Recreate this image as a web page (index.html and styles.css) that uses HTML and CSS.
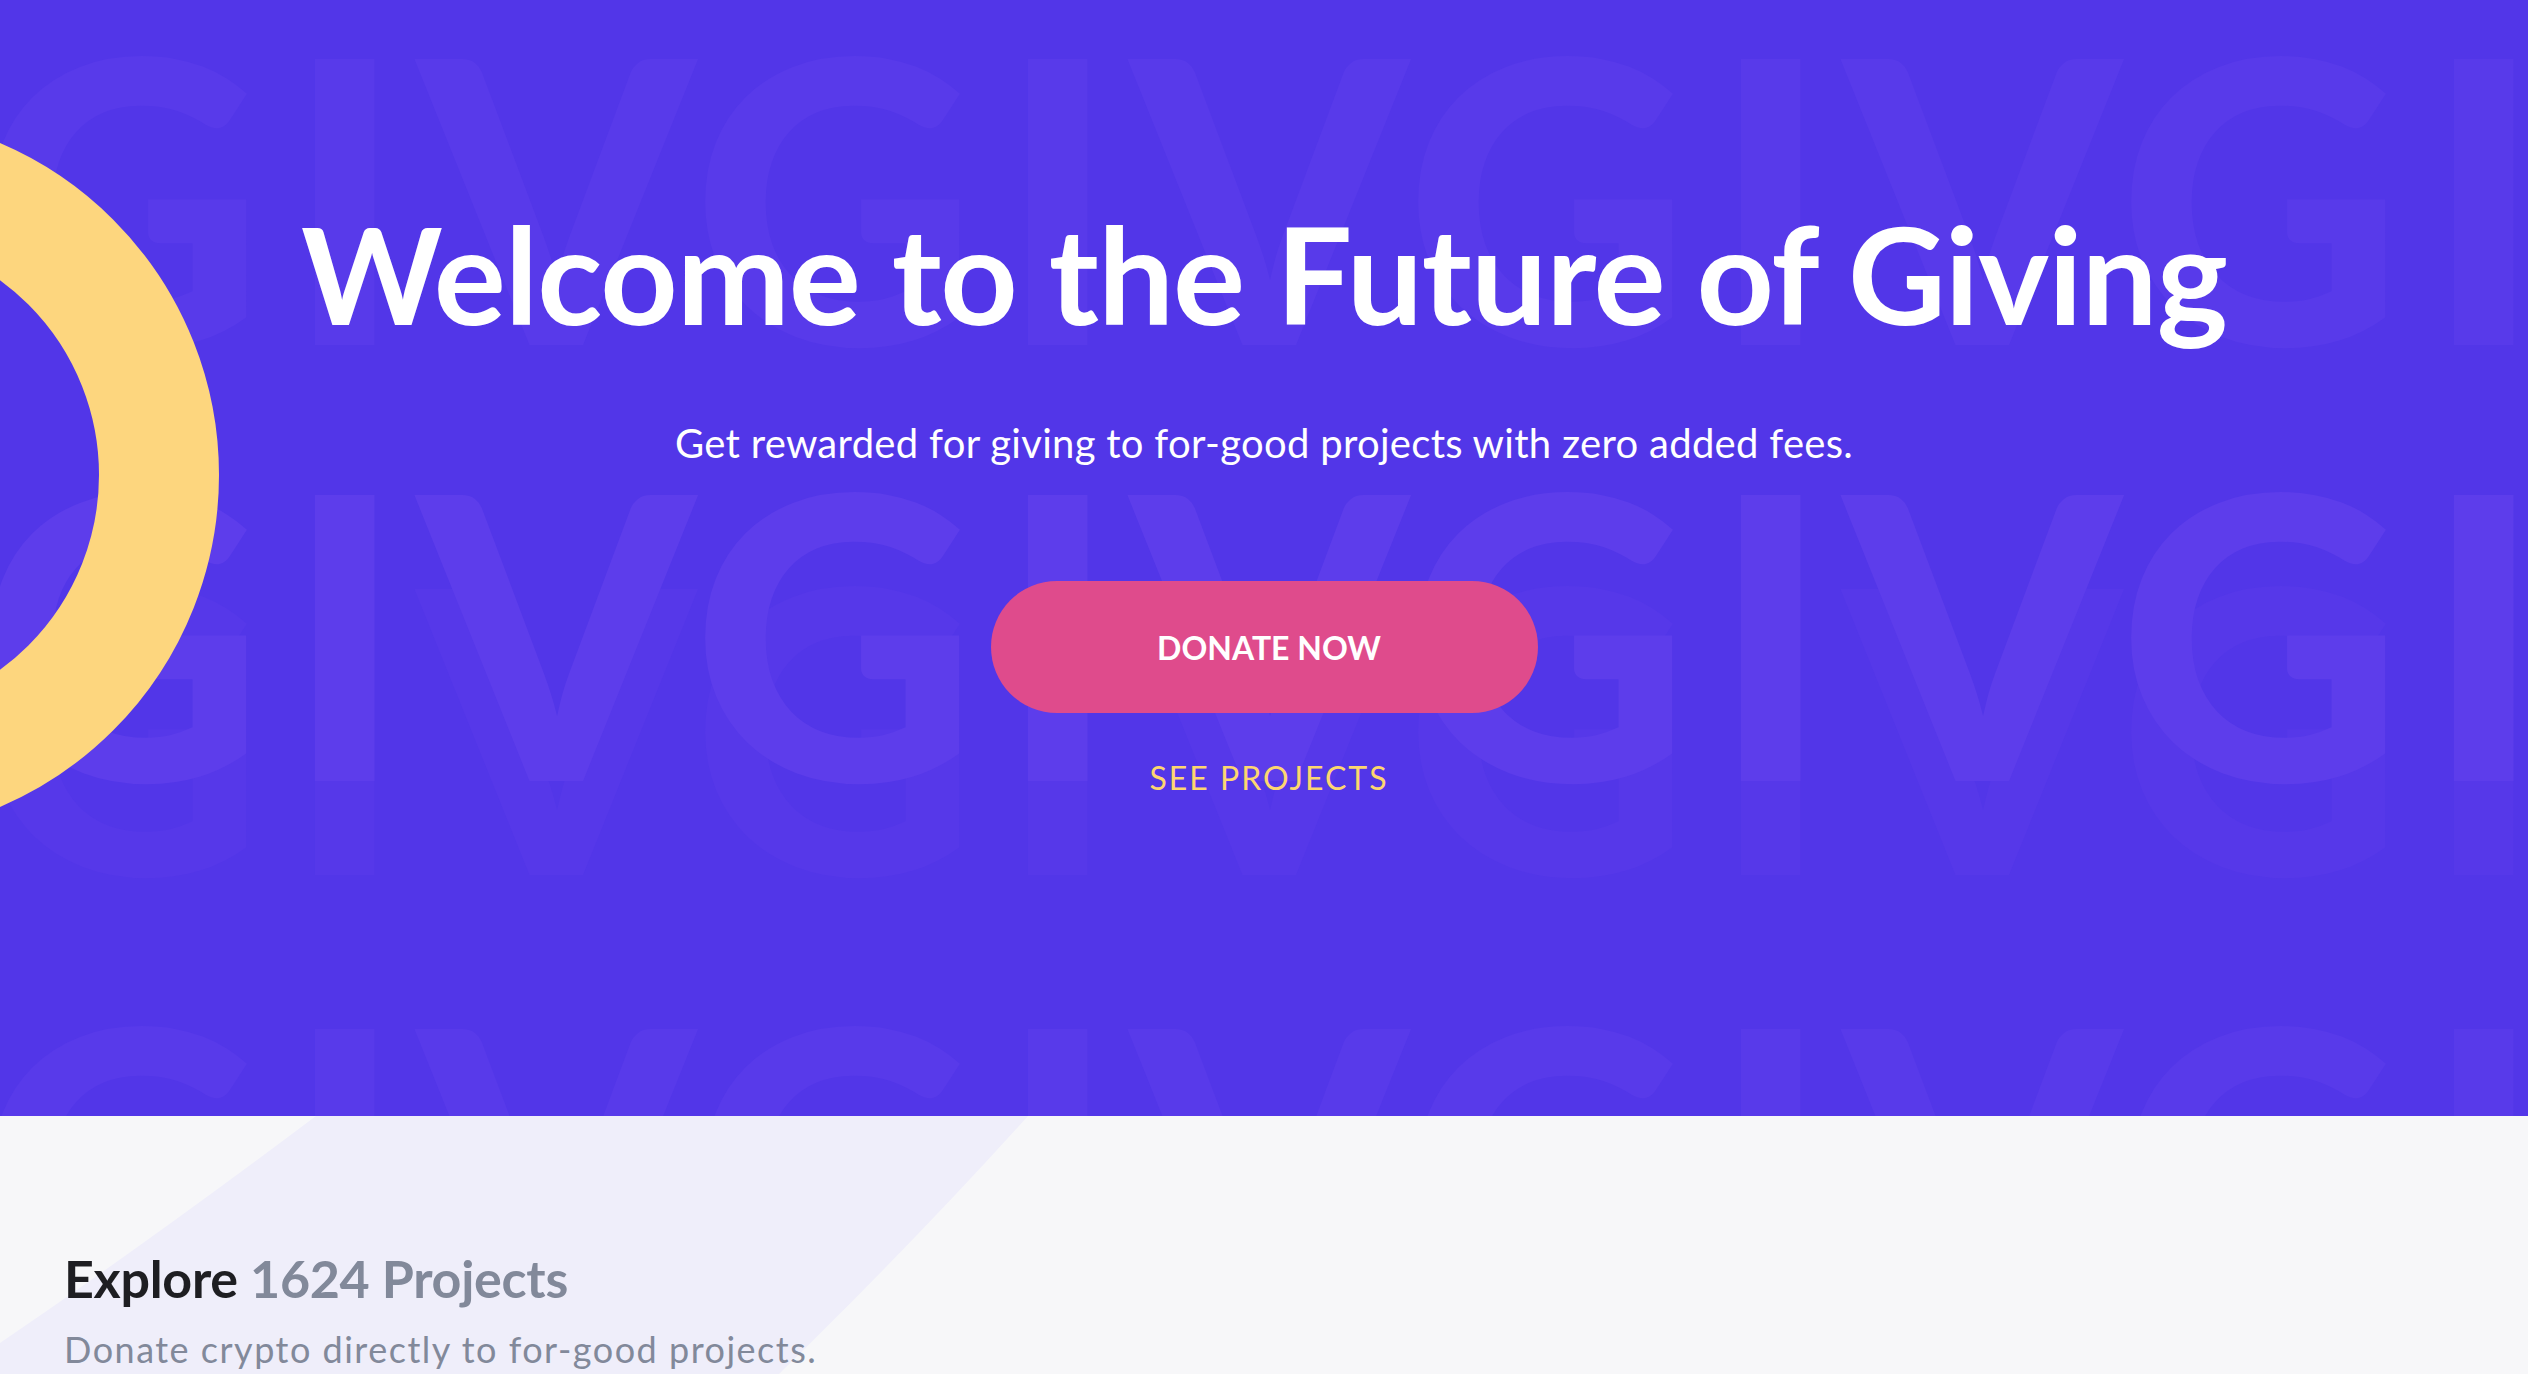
FILE: index.html
```html
<!DOCTYPE html>
<html lang="en">
<head>
<meta charset="utf-8">
<title>Giveth - Welcome to the Future of Giving</title>
<link rel="stylesheet" href="styles.css">
</head>
<body>
<header class="hero">
  <svg class="pattern" width="2528" height="1116" viewBox="0 0 2528 1116" aria-hidden="true">
    <text class="row-mid" x="-21 285 418 692 998 1131 1405 1711 1844 2118 2424" y="345">GIVGIVGIVGI</text>
    <text class="row-shadow" x="-21 285 418 692 998 1131 1405 1711 1844 2118 2424" y="875">GIVGIVGIVGI</text>
    <text class="row-main" x="-21 285 418 692 998 1131 1405 1711 1844 2118 2424" y="781">GIVGIVGIVGI</text>
    <text class="row-mid" x="-21 285 418 692 998 1131 1405 1711 1844 2118 2424" y="1315">GIVGIVGIVGI</text>
  </svg>
  <svg class="ring" width="240" height="840" viewBox="0 0 240 840" aria-hidden="true">
    <circle cx="-142" cy="475" r="301" fill="none" stroke="#FDD67E" stroke-width="120"/>
  </svg>
  <div class="hero-content">
    <h1 class="hero-title">Welcome to the Future of Giving</h1>
    <p class="hero-lead">Get rewarded for giving to for-good projects with zero added fees.</p>
    <a class="btn-donate" href="#">DONATE NOW</a>
    <a class="link-projects" href="#">SEE PROJECTS</a>
  </div>
</header>
<section class="explore">
  <svg class="band" width="1100" height="258" viewBox="0 0 1100 258" aria-hidden="true">
    <path d="M316 0 L1028 0 Q 920 120 779 258 L0 258 L0 227 Q 150 125 316 0 Z" fill="#EFEEFA"/>
  </svg>
  <div class="explore-inner">
    <h2 class="explore-title">Explore <span class="explore-count">1624 Projects</span></h2>
    <p class="explore-sub">Donate crypto directly to for-good projects.</p>
  </div>
</section>
</body>
</html>
```

FILE: styles.css
```css
* {
  box-sizing: border-box;
}

html, body {
  margin: 0;
  padding: 0;
}

body {
  font-family: "Lato", "Liberation Sans", sans-serif;
  background: #F7F7F9;
  width: 2528px;
  height: 1374px;
  overflow: hidden;
}

.hero {
  position: relative;
  height: 1116px;
  background: #5236E8;
  overflow: hidden;
}

.pattern {
  position: absolute;
  left: 0;
  top: 0;
  font-family: "Lato", "Liberation Sans", sans-serif;
  font-weight: 900;
  font-size: 394px;
}

.row-main {
  fill: #5D3DEB;
}

.row-mid {
  fill: #583AEA;
}

.row-shadow {
  fill: #5638E9;
}

.ring {
  position: absolute;
  left: 0;
  top: 0;
}

.hero-content {
  position: relative;
  display: flex;
  flex-direction: column;
  align-items: center;
  padding-top: 192px;
}

.hero-title {
  margin: 0;
  font-family: "Lato", "Liberation Sans", sans-serif;
  font-weight: 700;
  font-size: 135px;
  line-height: 1.2;
  letter-spacing: -1px;
  color: #FFFFFF;
}

.hero-lead {
  margin: 65px 0 0;
  font-size: 40px;
  line-height: 48px;
  letter-spacing: 0.3px;
  color: #FFFFFF;
}

.btn-donate {
  margin-top: 114px;
  width: 547px;
  height: 132px;
  padding-left: 10px;
  display: flex;
  align-items: center;
  justify-content: center;
  border-radius: 66px;
  background: #DF4B8C;
  color: #FFFFFF;
  font-weight: 700;
  font-size: 32px;
  text-decoration: none;
}

.link-projects {
  margin-top: 46px;
  padding-left: 10px;
  font-size: 32px;
  line-height: 38px;
  letter-spacing: 2px;
  color: #FDD670;
  text-decoration: none;
}

.explore {
  position: relative;
  height: 258px;
  overflow: hidden;
  background: #F7F7F9;
}

.band {
  position: absolute;
  left: 0;
  top: 0;
}

.explore-inner {
  position: relative;
  padding: 131px 0 0 64px;
}

.explore-title {
  margin: 0;
  font-size: 52px;
  line-height: 62px;
  font-weight: 700;
  letter-spacing: -0.3px;
  color: #1E1E22;
}

.explore-count {
  color: #82899A;
}

.explore-sub {
  margin: 19px 0 0;
  font-size: 36px;
  line-height: 43px;
  letter-spacing: 1.5px;
  color: #82899A;
}
```
